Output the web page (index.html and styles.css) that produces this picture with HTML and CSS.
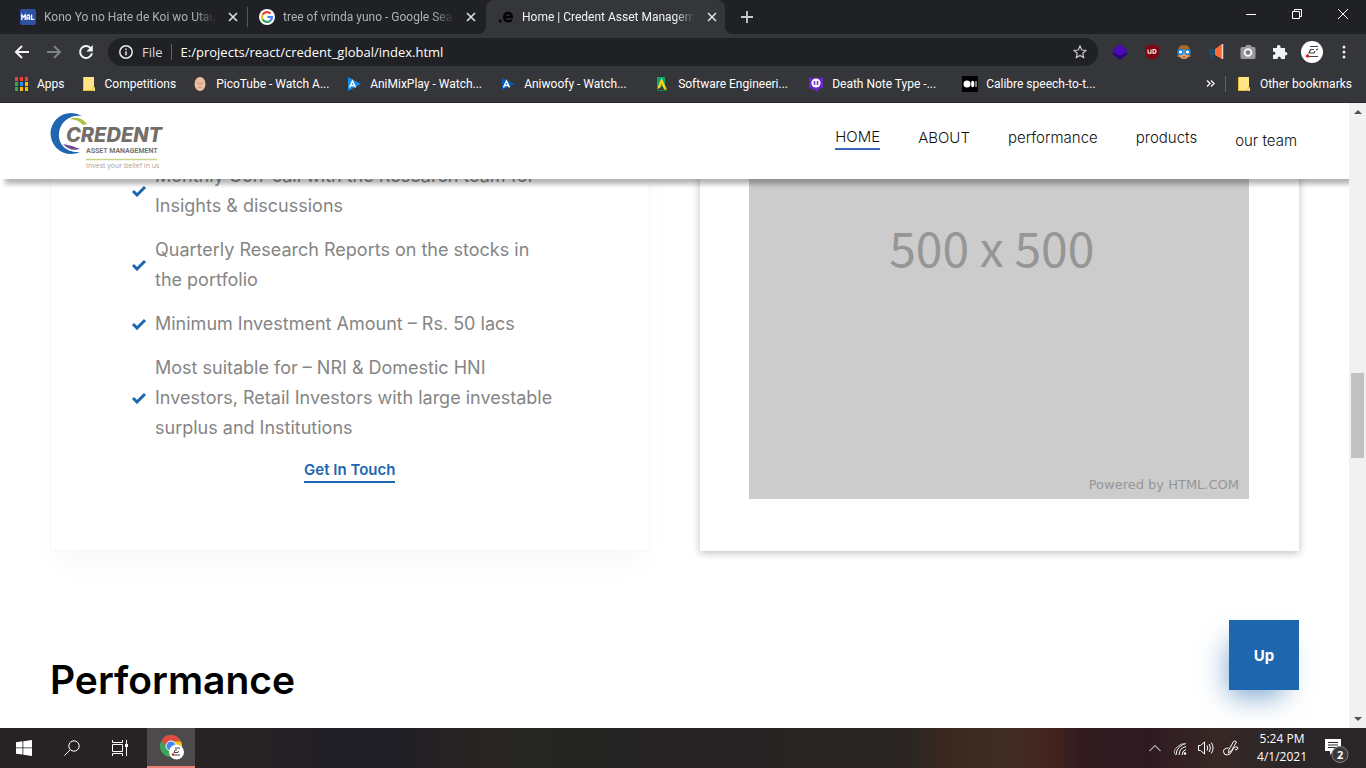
FILE: index.html
```html
<!DOCTYPE html>
<html lang="en">
<head>
<meta charset="utf-8">
<meta name="viewport" content="width=device-width, initial-scale=1">
<title>Home | Credent Asset Management</title>
<link rel="stylesheet" href="styles.css">
</head>
<body>
<div class="desktop">
  <div class="browser-top">
    <div class="tab-strip">
      <div class="tab">
        <svg class="icon16" viewBox="0 0 16 16"><rect width="16" height="16" rx="2" fill="#2e51a2"/><path d="M1.800 11V6l1.700 2.200L5.200 6v5M7 11V7.500Q7 6 8.300 6t1.300 1.500V11M7 9.200h2.600M11.600 5.500v4.800h2.800" fill="none" stroke="#fff" stroke-width="1.300"/></svg>
        <span class="tab-title">Kono Yo no Hate de Koi wo Utau</span>
        <button class="tab-close" aria-label="Close tab"><svg viewBox="0 0 10 10"><path d="M1 1l8 8M9 1L1 9"/></svg></button>
      </div>
      <div class="tab tab-divided">
        <svg class="icon16" viewBox="0 0 16 16"><circle cx="8" cy="8" r="8" fill="#fff"/><g fill="none" stroke-width="2.200"><path d="M11.600 4.600A5 5 0 0 0 3.600 5.700" stroke="#ea4335"/><path d="M3.600 5.700a5 5 0 0 0 0 4.600" stroke="#fbbc05"/><path d="M3.600 10.300a5 5 0 0 0 7.600 1.500" stroke="#34a853"/><path d="M11.200 11.800A5 5 0 0 0 13 8H8.300" stroke="#4285f4"/></g></svg>
        <span class="tab-title">tree of vrinda yuno - Google Sea</span>
        <button class="tab-close" aria-label="Close tab"><svg viewBox="0 0 10 10"><path d="M1 1l8 8M9 1L1 9"/></svg></button>
      </div>
      <div class="tab tab-active">
        <svg class="icon16" viewBox="0 0 16 16"><circle cx="2.200" cy="12" r="1.500" fill="#050505"/><path d="M5.800 8h8q0-4-3.600-4T6.200 8q0 4.200 4.200 4.200 2.200 0 3.300-1.500" fill="none" stroke="#050505" stroke-width="2.400"/></svg>
        <span class="tab-title">Home | Credent Asset Managem</span>
        <button class="tab-close" aria-label="Close tab"><svg viewBox="0 0 10 10"><path d="M1 1l8 8M9 1L1 9"/></svg></button>
      </div>
      <button class="new-tab" aria-label="New tab"><svg viewBox="0 0 12 12"><path d="M6 0v12M0 6h12" stroke="#c8cacd" stroke-width="1.800"/></svg></button>
      <div class="window-controls">
        <button aria-label="Minimize"><svg viewBox="0 0 10 10"><path d="M0 5.500h10"/></svg></button>
        <button aria-label="Restore"><svg viewBox="0 0 10 10"><path d="M.5 2.500h7v7h-7zM2.500 2.500v-2h7v7h-2"/></svg></button>
        <button aria-label="Close"><svg viewBox="0 0 10 10"><path d="M0 0l10 10M10 0L0 10"/></svg></button>
      </div>
    </div>

    <div class="toolbar">
      <button class="nav-button" aria-label="Back"><svg viewBox="0 0 16 16"><path d="M15 8H2M8 2L2 8l6 6"/></svg></button>
      <button class="nav-button dim" aria-label="Forward"><svg viewBox="0 0 16 16"><path d="M1 8h13M8 2l6 6-6 6"/></svg></button>
      <button class="nav-button" aria-label="Reload"><svg viewBox="0 0 16 16"><path d="M13.200 4.800A6 6 0 1 0 14 9.200"/><path d="M14.800 1v6.500H8.300z" fill="#f1f3f4" stroke="none"/></svg></button>
      <div class="omnibox">
        <svg class="info" viewBox="0 0 14 14"><circle cx="7" cy="7" r="6.200"/><path d="M7 6.200v4M7 3.500v1.500"/></svg>
        <span class="scheme">File</span>
        <input class="address" type="text" aria-label="Address" value="E:/projects/react/credent_global/index.html">
        <svg class="star" viewBox="0 0 14 14"><path d="M7 1l1.800 4 4.200.4-3.200 2.900.9 4.300L7 10.400l-3.700 2.200.9-4.300L1 5.400 5.200 5z"/></svg>
      </div>
      <div class="extensions">
        <svg class="icon16" viewBox="0 0 16 16"><path d="M8 4l8 5.500L8 16 0 9.500z" fill="#2c067c"/><path d="M8 0l8 6.500L8 12 0 6.500z" fill="#4b0bb5"/></svg>
        <svg class="icon16" viewBox="0 0 16 16"><path d="M8 0q3 2 7 2v6q0 5-7 8-7-3-7-8V2q4 0 7-2z" fill="#7d0710"/><path d="M4 5.500v2.800q0 1 1 1h2v-3.800M9 5.500h1q2 0 2 1.900t-2 1.900H9z" fill="none" stroke="#fff" stroke-width="1.100"/></svg>
        <svg class="icon16" viewBox="0 0 16 16"><path d="M2 9Q1 1 8 1t6 8l1 4H1z" fill="#a86a20"/><path d="M3 6h10v5q-1 4-5 4t-5-4z" fill="#eca36e"/><g fill="#fff" stroke="#1687dc" stroke-width="1.600"><circle cx="4.500" cy="8" r="2.400"/><circle cx="11.500" cy="8" r="2.400"/></g><path d="M6 13h4" stroke="#9b4b2c"/></svg>
        <svg class="icon16" viewBox="0 0 16 16"><path d="M1 5h6v6H5v4H3l-2-4z" fill="#1f4a68"/><path d="M7 5l7-5v15l-7-4z" fill="#ff6b35"/><path d="M14.500 0v15" stroke="#e9d5ce" stroke-width="1.500"/></svg>
        <svg class="icon16" viewBox="0 0 16 16"><path d="M2 3h3l1.500-2h4L12 3h2q1.500 0 1.500 1.500v9Q15.500 15 14 15H2Q.5 15 .5 13.500v-9Q.5 3 2 3z" fill="#9a9a9a"/><circle cx="8" cy="8.500" r="3.300" fill="#77797b" stroke="#f4f4f4" stroke-width="2"/></svg>
        <svg class="icon16" viewBox="0 0 16 16"><path d="M1 4h4q-.5-3 1.700-3T8.500 4H13v4q2.500-.3 2.500 1.700T13 11.500V15H9q0-2.500-1.700-2.500T5.500 15H1v-4q2.500 0 2.500-1.700T1 7.500z" fill="#f1f3f4"/></svg>
      </div>
      <svg class="avatar" viewBox="0 0 22 22"><circle cx="11" cy="11" r="11" fill="#fff"/><path d="M9 5.500h8M13 8.500H9.500L8 12h5l1-2M17 8l-2 1M8 15.500h9" fill="none" stroke="#444" stroke-width="1.200"/><circle cx="6.500" cy="15" r="1.800" fill="#d5232e"/></svg>
      <button class="menu" aria-label="Menu"><svg viewBox="0 0 4 16"><circle cx="2" cy="3" r="1.500"/><circle cx="2" cy="8" r="1.500"/><circle cx="2" cy="13" r="1.500"/></svg></button>
    </div>

    <div class="bookmarks">
      <a class="bookmark" href="#"><svg class="icon16" viewBox="0 0 16 16"><path d="M2 1h3v4H2zM7 1h3v4H7zM12 1h3v4h-3z" fill="#ea4335"/><path d="M2 6h3v4H2zM2 11h3v4H2z" fill="#34a853"/><path d="M7 6h3v4H7z" fill="#2b8cf0"/><path d="M12 6h3v4h-3zM7 11h3v4H7zM12 11h3v4h-3z" fill="#fbbc05"/></svg><span>Apps</span></a>
      <a class="bookmark bookmark-folder" href="#"><svg class="icon16" viewBox="0 0 16 16"><path d="M2 1h11v10h1v4H2z" fill="#ffe387"/><path d="M2.500 1v13.500h9.500v-3h2" fill="none" stroke="#e5bd35"/></svg><span>Competitions</span></a>
      <a class="bookmark bookmark-site" href="#"><svg class="icon16" viewBox="0 0 16 16"><ellipse cx="8" cy="8" rx="5.500" ry="7" fill="#efbea2"/><path d="M4.500 7h2.500M9 7h2.500M6.500 11.500h3M8 7v3" stroke="#b48b78" stroke-width=".8"/></svg><span>PicoTube - Watch A...</span></a>
      <a class="bookmark bookmark-site" href="#"><svg class="icon16" viewBox="0 0 16 16"><path d="M2 1l13 7-13 7z" fill="#168ceb"/><path d="M3.500 11.500L6.500 5l3 6.500M5 9.500h3" fill="none" stroke="#fff" stroke-width="1.500"/></svg><span>AniMixPlay - Watch...</span></a>
      <a class="bookmark bookmark-site" href="#"><svg class="icon16" viewBox="0 0 16 16"><path d="M2 2l13 6-13 6z" fill="#0757b6"/><path d="M3.500 11.500L6.500 5l3 6.500M5 9.500h3" fill="none" stroke="#fff" stroke-width="1.500"/></svg><span>Aniwoofy - Watch...</span></a>
      <a class="bookmark bookmark-site" href="#"><svg class="icon16" viewBox="0 0 16 16"><path d="M3 1h8v10H3z" fill="#10a66a"/><path d="M3 13L7.500 2 13 13.500h-3L7.500 7 6 12z" fill="#ffd21b"/><path d="M3 14.500h10" stroke="#078b50"/></svg><span>Software Engineeri...</span></a>
      <a class="bookmark bookmark-site" href="#"><svg class="icon16" viewBox="0 0 16 16"><path d="M1 1l3 1h8l3-1v11l-4 1-2 3-2-2-6-2z" fill="#6927c9"/><circle cx="8" cy="7" r="4.600" fill="#fff"/><path d="M6.500 5v4M9.500 5v4" stroke="#6927c9" stroke-width="1.500"/></svg><span>Death Note Type -...</span></a>
      <a class="bookmark bookmark-site" href="#"><svg class="icon16" viewBox="0 0 16 16"><path d="M0 0h16v16H0z"/><circle cx="5" cy="8" r="3.500" fill="#fff"/><ellipse cx="10.700" cy="8" rx="1.600" ry="3.300" fill="#fff"/><path d="M14 5v6" stroke="#fff"/></svg><span>Calibre speech-to-t...</span></a>
      <button class="overflow" aria-label="More bookmarks"><svg viewBox="0 0 9 7"><path d="M1 .5l3 3-3 3M5 .5l3 3-3 3"/></svg></button>
      <a class="bookmark bookmark-other" href="#"><svg class="icon16" viewBox="0 0 16 16"><path d="M2 1h11v10h1v4H2z" fill="#ffe387"/><path d="M2.500 1v13.500h9.500v-3h2" fill="none" stroke="#e5bd35"/></svg><span>Other bookmarks</span></a>
    </div>
  </div>

  <div class="viewport">
    <div class="page">
      <header class="site-header">
        <a class="logo" href="#" aria-label="Credent Asset Management">
          <svg viewBox="0 0 116 60">
            <path d="M33 5Q28 2 22 2A20.500 20.500 0 0 0 22 43Q27 43 31 41C16 42 9 32 10 22 11 11 21 3 33 5z" fill="#1e66b0"/>
            <path d="M20 8q11-4 18 5l-4 1q-5-6-14-6z" fill="#a9c23f"/>
            <path d="M14 33q8 1 17 5-10 3-17-5z" fill="#6b4a9c"/>
            <text class="logo-name" x="17" y="31">CREDENT</text>
            <text class="logo-sub" x="37" y="42">ASSET MANAGEMENT</text>
            <path d="M37 48.500h71" stroke="#c5d58a" stroke-width="1.500"/>
            <text class="logo-tag" x="37" y="57">Invest your belief in us</text>
          </svg>
        </a>
        <nav class="site-nav">
          <a class="current" href="#">HOME</a>
          <a href="#">ABOUT</a>
          <a href="#">performance</a>
          <a href="#">products</a>
          <a class="last" href="#">our team</a>
        </nav>
      </header>

      <main class="content">
        <section class="cards">
          <article class="card features">
            <ul class="feature-list">
              <li><svg class="check" viewBox="0 0 16 12"><path d="M2 6l4 4 8-8"/></svg><span>Monthly Con-call with the Research team for Insights &amp; discussions</span></li>
              <li><svg class="check" viewBox="0 0 16 12"><path d="M2 6l4 4 8-8"/></svg><span>Quarterly Research Reports on the stocks in the portfolio</span></li>
              <li><svg class="check" viewBox="0 0 16 12"><path d="M2 6l4 4 8-8"/></svg><span>Minimum Investment Amount – Rs. 50 lacs</span></li>
              <li><svg class="check" viewBox="0 0 16 12"><path d="M2 6l4 4 8-8"/></svg><span>Most suitable for – NRI &amp; Domestic HNI Investors, Retail Investors with large investable surplus and Institutions</span></li>
            </ul>
            <a class="contact" href="#">Get In Touch</a>
          </article>
          <article class="card preview">
            <div class="placeholder">
              <span class="dimensions">500 x 500</span>
              <span class="powered">Powered by HTML.COM</span>
            </div>
          </article>
        </section>
        <h2 class="section-title">Performance</h2>
      </main>
      <button class="up">Up</button>
    </div>
    <div class="scrollbar">
      <svg viewBox="0 0 8 4"><path d="M0 4l4-4 4 4z"/></svg>
      <div class="track"><div class="thumb"></div></div>
      <svg viewBox="0 0 8 4"><path d="M0 0l4 4 4-4z"/></svg>
    </div>
  </div>

  <div class="taskbar">
    <button class="task" aria-label="Start"><svg class="icon16" viewBox="0 0 16 16"><path d="M0 2.300l6.500-1v6.200H0zM7.300 1.200L16 0v7.500H7.300zM0 8.300h6.500v6.300L0 13.700zM7.300 8.300H16V16l-8.700-1.200z" fill="#fff"/></svg></button>
    <button class="task" aria-label="Search"><svg class="icon16 line" viewBox="0 0 16 16"><circle cx="10" cy="6" r="5.200"/><path d="M6.300 9.700L.5 15.500"/></svg></button>
    <button class="task" aria-label="Task view"><svg class="icon16 line" viewBox="0 0 16 16"><path d="M.5 0v2.500h10V0M.5 16v-2.500h10V16M.5 4.500h10v7H.5zM14.500 0v16"/><path d="M13 4h3v3h-3z" fill="#fff" stroke="none"/></svg></button>
    <button class="task task-chrome" aria-label="Google Chrome"><svg viewBox="0 0 26 26"><circle cx="13" cy="12" r="11" fill="#3aa757"/><path d="M3.500 6.500A11 11 0 0 1 23 7.500H13L8.800 14z" fill="#e04a3f"/><path d="M23 7.500A11 11 0 0 1 13 23l5-8.500L13 7.500z" fill="#fbc116"/><circle cx="13" cy="12" r="5" fill="#4285f4" stroke="#fff"/><circle cx="18.500" cy="18" r="7.500" fill="#fff"/><path d="M17 14h5M19 16h-2l-1 2.500h4l.5-1.500M16 21h6" fill="none" stroke="#444"/><circle cx="15" cy="20.500" r="1.300" fill="#d5232e"/></svg></button>
    <div class="tray">
      <svg class="chevron line" viewBox="0 0 12 8"><path d="M.5 7L6 1.500 11.500 7"/></svg>
      <svg class="icon16 line" viewBox="0 0 16 16"><path d="M3 15A12 12 0 0 1 13 3.500M6 15A9 9 0 0 1 13 6.500M9 15A6 6 0 0 1 13 9.500"/><path d="M3 15q-4-3 1-8 4-4 9-3.500" stroke="#b8b6b7"/><circle cx="12" cy="13.500" r="1.300" fill="#fff" stroke="none"/></svg>
      <svg class="icon16 line" viewBox="0 0 16 16"><path d="M.5 5.500h2l4-3.500v12l-4-3.500h-2zM9 5.500q1.500 2.500 0 5M11.200 4q2.500 4 0 8M13.300 2.500q3.500 5.500 0 11"/></svg>
      <svg class="icon16 line" viewBox="0 0 16 16"><path d="M5.500 13L6 9.500l4.500-8q1.500-1.500 3 .5l-5 8.500zM5.500 8Q.5 8 .5 11.500T4 15q4-.5 5-4t3.500-4 2.500 1-3 2"/></svg>
      <div class="clock"><span>5:24 PM</span><span>4/1/2021</span></div>
      <button class="notifications" aria-label="Notifications"><svg viewBox="0 -6 26 32"><path d="M1 1h16v12H9l-3 4v-4H1z" fill="#fff"/><path d="M4 4.500h10M4 7h10M4 9.500h10" stroke="#2b2729"/><circle cx="16" cy="16.500" r="8" fill="#3b3839" stroke="#858384"/><text x="13" y="21" class="badge">2</text></svg></button>
    </div>
  </div>
</div>
</body>
</html>
```
FILE: styles.css
```css
* { box-sizing: border-box; }

body {
  margin: 0;
  font-family: "Open Sans", "Noto Sans", sans-serif;
  font-size: 12px;
  color: #fff;
}

a { color: inherit; text-decoration: none; }

button {
  margin: 0;
  padding: 0;
  border: 0;
  background: none;
  color: inherit;
  font: inherit;
}

svg { display: block; flex: none; }

.desktop {
  display: flex;
  flex-direction: column;
  height: 100vh;
  overflow: hidden;
}

.icon16 { width: 16px; height: 16px; }

/* Browser chrome */
.browser-top {
  flex: none;
  background: #35363a;
  border-bottom: 1px solid #28292c;
}

.tab-strip {
  display: flex;
  height: 34px;
  padding-left: 8px;
  background: #202124;
  font-family: Roboto, "Open Sans", sans-serif;
}

.tab {
  display: flex;
  align-items: center;
  flex: 0 1 239px;
  min-width: 0;
  gap: 8px;
  padding: 0 6px 0 12px;
  color: #aeb1b5;
}

.tab-divided { background: linear-gradient(#55575b, #55575b) 0 50% / 1px 20px no-repeat; }

.tab-active {
  position: relative;
  background: #35363a;
  border-radius: 8px 8px 0 0;
  color: #f1f3f4;
}

.tab-active::before,
.tab-active::after {
  content: "";
  position: absolute;
  bottom: 0;
  width: 8px;
  height: 8px;
}

.tab-active::before { left: -8px; background: radial-gradient(circle at 0 0, #202124 8px, #35363a 8px); }
.tab-active::after { right: -8px; background: radial-gradient(circle at 100% 0, #202124 8px, #35363a 8px); }

.tab-title {
  flex: 1;
  white-space: nowrap;
  -webkit-mask-image: linear-gradient(90deg, #000 88%, transparent);
  mask-image: linear-gradient(90deg, #000 88%, transparent);
}

.tab-close { padding: 4px; }
.tab-close svg { width: 10px; height: 10px; fill: none; stroke: #dfe1e5; stroke-width: 1.600; }

.new-tab { padding: 0 16px; }
.new-tab svg { width: 12px; height: 12px; }

.window-controls { display: flex; margin-left: auto; }
.window-controls button { display: grid; place-items: center; width: 46px; height: 28px; }
.window-controls svg { width: 10px; height: 10px; fill: none; stroke: #fff; }

.toolbar {
  display: flex;
  align-items: center;
  height: 35px;
  padding: 0 16px 0 14px;
  font-size: 13px;
}

.nav-button { margin-right: 16px; }
.nav-button svg { width: 16px; height: 16px; fill: none; stroke: #f1f3f4; stroke-width: 2; }
.nav-button.dim svg { stroke: #7f8185; }

.omnibox {
  display: flex;
  align-items: center;
  flex: 1;
  height: 28px;
  margin-right: 14px;
  margin-left: -2px;
  padding: 0 11px;
  border-radius: 14px;
  background: #202124;
}

.info { width: 14px; height: 14px; fill: none; stroke: #e8eaed; stroke-width: 1.500; }
.scheme { margin-left: 9px; padding-right: 8px; border-right: 1px solid #5f6368; color: #dadce0; line-height: 16px; }
.address { flex: 1; min-width: 0; padding: 0 0 0 9px; border: 0; background: none; color: #fff; font: inherit; }
.star { width: 14px; height: 14px; fill: none; stroke: #c8cacd; stroke-width: 1.200; }

.extensions { display: flex; gap: 16px; }
.avatar { width: 22px; height: 22px; margin-left: 13px; }
.menu { margin-left: 15px; padding: 0 4px; }
.menu svg { width: 4px; height: 16px; fill: #e8eaed; }

.bookmarks {
  display: flex;
  align-items: center;
  height: 33px;
  padding: 0 14px 4px 13px;
  font-family: Roboto, "Open Sans", sans-serif;
}

.bookmark { display: flex; align-items: center; gap: 8px; white-space: nowrap; }
.bookmark-folder { margin: 0 16px; }
.bookmark-site { flex: 0 1 154px; min-width: 0; }
.overflow { margin-left: auto; }
.overflow svg { width: 9px; height: 7px; fill: none; stroke: #e8eaed; stroke-width: 1.500; }
.bookmark-other { margin-left: 10px; padding-left: 10px; border-left: 1px solid #5f6368; }

/* Page */
.viewport { display: flex; flex: 1; min-height: 0; background: #fff; }

.page {
  position: relative;
  flex: 1;
  min-width: 0;
  overflow: hidden;
  font-family: Inter, "Open Sans", sans-serif;
}

.site-header {
  position: absolute;
  z-index: 1;
  inset: 0 0 auto;
  display: flex;
  align-items: center;
  justify-content: space-between;
  height: 76px;
  padding: 0 52px 0 49px;
  background: #fff;
  box-shadow: 5px 5px 5px rgba(0, 0, 0, 0.3);
}

.logo svg { width: 116px; height: 60px; }
.logo-name { font: italic 800 20px Inter, sans-serif; fill: #736e68; }
.logo-sub { font: bold 7px Roboto, sans-serif; fill: #77736f; }
.logo-tag { font: 7px "Open Sans", sans-serif; fill: #a5a5a3; }

.site-nav {
  display: flex;
  align-items: center;
  gap: 38px;
  min-height: 28px;
  margin-bottom: 6px;
  color: #111;
  font-size: 15px;
  font-weight: 300;
  line-height: 22px;
}

.site-nav .current { border-bottom: 2px solid #3b67b5; }
.site-nav .last { align-self: flex-end; }

.content { padding: 0 50px; }

.cards { display: grid; grid-template-columns: 1fr 1fr; gap: 50px; }

.card { display: flex; flex-direction: column; min-width: 0; }

.features {
  align-items: center;
  padding: 58px 80px 67px;
  border: 1px solid #f7f7f7;
  border-top: 0;
  box-shadow: 0 20px 30px -10px rgba(0, 0, 0, 0.04);
}

.feature-list {
  display: flex;
  flex-direction: column;
  align-self: stretch;
  gap: 14px;
  margin: 0;
  padding: 0 10px 0 0;
  list-style: none;
  color: #858585;
  font-size: 18px;
  line-height: 30px;
}

.feature-list li { display: flex; align-items: center; gap: 8px; }
.check { width: 16px; height: 12px; fill: none; stroke: #1e66b0; stroke-width: 3; }

.contact {
  margin-top: 16px;
  border-bottom: 2px solid #1e66b0;
  color: #1e66b0;
  font-size: 15px;
  font-weight: 600;
  line-height: 22px;
}

.preview { padding: 0 50px 52px 49px; box-shadow: 0 2px 8px rgba(0, 0, 0, 0.25); }

.placeholder {
  display: flex;
  flex: 1;
  flex-direction: column;
  align-items: center;
  justify-content: space-between;
  padding: 113px 10px 4px;
  background: #ccc;
  color: #969696;
}

.dimensions {
  padding-right: 14px;
  font-family: "Noto Sans CJK SC", sans-serif;
  font-size: 48px;
  line-height: 60px;
}

.powered { align-self: flex-end; font: 13px/20px "DejaVu Sans", sans-serif; }

.section-title {
  margin: 104px 0 0;
  color: #000;
  font-size: 39px;
  font-weight: 600;
  line-height: 50px;
}

.up {
  position: absolute;
  right: 50px;
  bottom: 38px;
  width: 70px;
  height: 70px;
  background: #1e66ae;
  box-shadow: -8px 14px 28px -8px rgba(30, 102, 174, 0.6);
  color: #fff;
  font-size: 15px;
  font-weight: 700;
}

.scrollbar {
  display: flex;
  flex-direction: column;
  align-items: center;
  flex: none;
  width: 17px;
  padding: 7px 2px;
  background: #f1f1f1;
}

.scrollbar svg { width: 8px; height: 4px; fill: #505050; }
.track { flex: 1; align-self: stretch; }
.track::before { content: ""; display: block; height: 43%; }
.thumb { height: 14%; background: #c1c1c1; }

/* Taskbar */
.taskbar {
  display: flex;
  flex: none;
  height: 40px;
  background: linear-gradient(90deg, #272224 0 18%, #211f26 24%, #211f26 29%, #282622 36%, #242522 42%, #262225 50%, #282522 61%, #2c2623 67%, #3b271e 69%, #402d26 74%, #45231d 77%, #321c22 79%, #2e1b21 84%, #382725 89%, #2b2729 94%);
}

.task { display: grid; place-items: center; width: 48px; }
.task-chrome { margin-left: 3px; background: #4d4a4b; border-bottom: 2px solid #f07f77; }
.task-chrome svg { width: 26px; height: 26px; }
.line { fill: none; stroke: #fff; stroke-width: 1; }
.tray { display: flex; align-items: center; gap: 9px; margin-left: auto; }
.chevron { width: 12px; height: 8px; margin-right: 3px; }
.clock { display: flex; flex-direction: column; align-items: center; margin: 0 8px 0 9px; line-height: 18px; font-size: 12px; }
.notifications { padding-right: 16px; }
.notifications svg { width: 26px; height: 32px; }
.badge { font: bold 11px "Open Sans", sans-serif; fill: #fff; }
```
